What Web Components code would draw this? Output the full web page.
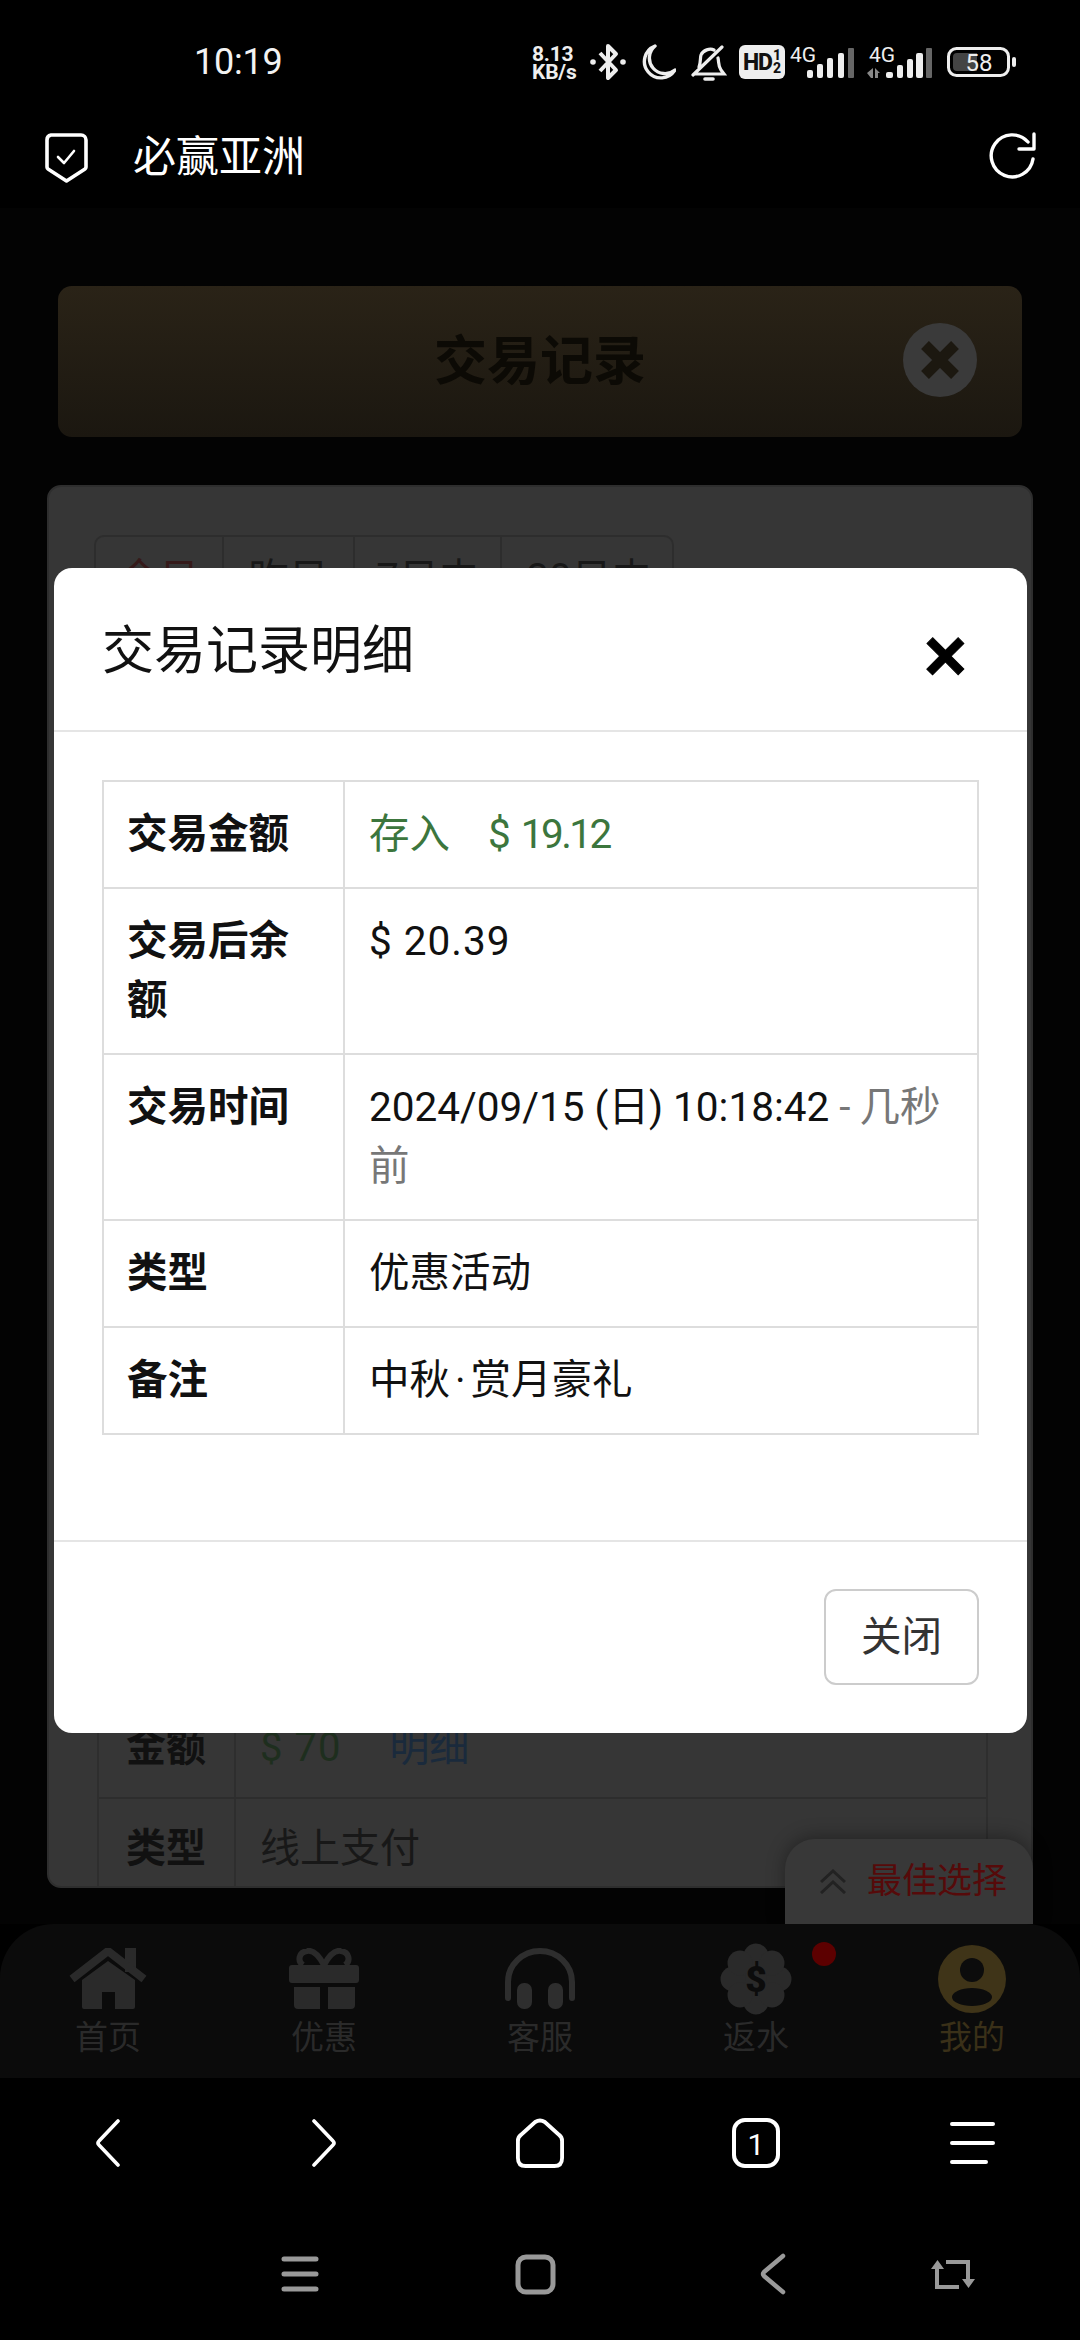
<!DOCTYPE html>
<html lang="zh-CN">
<head>
<meta charset="utf-8">
<title>交易记录明细</title>
<style>
  html, body { margin: 0; padding: 0; background: #000; }
  body { width: 1080px; height: 2340px; overflow: hidden; font-family: Roboto, "Noto Sans CJK SC", sans-serif; }
</style>
</head>
<body>
<phone-status></phone-status>
<app-bar>必赢亚洲</app-bar>
<page-view>
  <record-header>交易记录</record-header>
  <record-card>
    <range-tabs>
      <range-tab class="on" style="width:128px">今日</range-tab>
      <range-tab style="width:131px">昨日</range-tab>
      <range-tab style="width:147px">7日内</range-tab>
      <range-tab style="width:174px" last>30日内</range-tab>
    </range-tabs>
    <back-table>
      <back-row label="金额"><span style="color:#1e2e1e;letter-spacing:1px">$ 70</span><span style="color:#1a2a3c;margin-left:48px">明细</span></back-row>
      <back-row label="类型">线上支付</back-row>
    </back-table>
  </record-card>
  <best-choice>最佳选择</best-choice>
  <detail-modal>
    <span slot="title">交易记录明细</span>
    <detail-row label="交易金额"><span style="color:#3c763d">存入<span style="margin-left:38px">$ <span style="letter-spacing:-2.6px">19.12</span></span></span></detail-row>
    <detail-row label="交易后余额"><span style="letter-spacing:1px">$ 20.39</span></detail-row>
    <detail-row label="交易时间">2024/09/15 (日) 10:18:42 <span style="color:#777"><span style="letter-spacing:9px">-</span>几秒前</span></detail-row>
    <detail-row label="类型">优惠活动</detail-row>
    <detail-row label="备注">中秋<span style="margin:0 5px">·</span>赏月豪礼</detail-row>
  </detail-modal>
</page-view>
<main-nav>
  <nav-item>
    <svg slot="icon" width="80" height="61" viewBox="0 0 80 61" fill="#2a2a2a"><rect x="57" y="0" width="11" height="24"/><path d="M4 31 40 3l36 28" fill="none" stroke="#2a2a2a" stroke-width="8"/><path d="M14 32 40 13l27 19v27a2 2 0 0 1-2 2H47V44H34v17H16a2 2 0 0 1-2-2z"/></svg>
    首页
  </nav-item>
  <nav-item>
    <svg slot="icon" width="70" height="61" viewBox="0 0 70 61" fill="#2a2a2a"><path d="M35 17C29 6 23 2 18 3 10 4 8 13 14 17M35 17C41 6 47 2 52 3c8 1 10 10 4 14" fill="none" stroke="#2a2a2a" stroke-width="6"/><rect x="0" y="17" width="70" height="18" rx="3"/><path d="M5 39h26v22H9a4 4 0 0 1-4-4zM39 39h27v18a4 4 0 0 1-4 4H39z"/></svg>
    优惠
  </nav-item>
  <nav-item>
    <svg slot="icon" width="70" height="61" viewBox="0 0 70 61" fill="#2e2e2e"><path d="M3 50V34a32 31 0 0 1 64 0v16" fill="none" stroke="#2e2e2e" stroke-width="6" stroke-linecap="round"/><rect x="12" y="35" width="15" height="26" rx="7"/><rect x="43" y="35" width="15" height="26" rx="7"/></svg>
    客服
  </nav-item>
  <nav-item>
    <svg slot="icon" width="72" height="72" viewBox="0 0 72 72" fill="#2a2a2a"><circle cx="36" cy="36" r="26"/><circle cx="36" cy="13" r="12.5"/><circle cx="36" cy="59" r="12.5"/><circle cx="13" cy="36" r="12.5"/><circle cx="59" cy="36" r="12.5"/><circle cx="20" cy="20" r="12.5"/><circle cx="52" cy="20" r="12.5"/><circle cx="20" cy="52" r="12.5"/><circle cx="52" cy="52" r="12.5"/><text x="36" y="49" text-anchor="middle" font-family="Roboto" font-weight="900" font-size="37" fill="#0c0c0c">$</text></svg>
    返水
    <span slot="dot"></span>
  </nav-item>
  <nav-item style="color:#3a3018">
    <svg slot="icon" width="68" height="68" viewBox="0 0 68 68"><circle cx="34" cy="34" r="34" fill="#3f3418"/><circle cx="34" cy="25" r="12" fill="#0c0c0c"/><ellipse cx="34" cy="52" rx="20" ry="9" fill="#0c0c0c"/></svg>
    我的
  </nav-item>
</main-nav>
<browser-bar></browser-bar>
<system-nav></system-nav>
<script>
function define(name, css, html, init) {
  customElements.define(name, class extends HTMLElement {
    constructor() {
      super();
      const root = this.attachShadow({ mode: 'open' });
      root.innerHTML = '<style>' + css + '</style>' + html;
    }
    connectedCallback() { if (init) init(this, this.shadowRoot); }
  });
}

define('phone-status', `
  :host{display:flex;align-items:flex-start;height:104px;box-sizing:border-box;color:#fff;position:relative}
  .time{font:400 36px/44px Roboto,sans-serif;margin:40px 0 0 194px;color:#f2f2f2;flex:none;letter-spacing:-.2px}
  .speed{font:700 21px/18px Roboto,sans-serif;margin:45px 0 0 auto;width:48px;flex:none;color:#eee;letter-spacing:-.2px}
  .speed span{display:block}
  svg{display:block;flex:none}
  .hd{flex:none;margin:45px 0 0 12px;width:46px;height:34px;border-radius:6px;background:#eee;color:#111;display:flex;align-items:center;justify-content:center;font:800 23px/1 Roboto,sans-serif;letter-spacing:-1px}
  .hd i{font:800 14px/13px Roboto,sans-serif;display:flex;flex-direction:column;margin-left:1px;letter-spacing:0}
  .end{width:65px;flex:none}
`, `
  <span class="time">10:19</span>
  <span class="speed"><span>8.13</span><span>KB/s</span></span>
  <svg style="margin:43px 0 0 10px" width="36" height="38" viewBox="0 0 36 38" fill="none" stroke="#eee" stroke-width="4" stroke-linejoin="round"><path d="M10 10 26 27l-8 8V3l8 8-16 17"/><circle cx="3" cy="19" r="2.8" fill="#eee" stroke="none"/><circle cx="33" cy="19" r="2.8" fill="#eee" stroke="none"/></svg>
  <svg style="margin:44px 0 0 15px" width="35" height="36" viewBox="0 0 35 36" fill="none" stroke="#eee" stroke-width="3.4" stroke-linejoin="round"><path d="M14 2A16.500 16.500 0 1 0 34 26 15 15 0 0 1 14 2z"/></svg>
  <svg style="margin:45px 0 0 15px" width="36" height="37" viewBox="0 0 36 37" fill="none" stroke="#eee" stroke-width="3.2" stroke-linecap="round"><path d="M8 22c2-5 1-9 2-12 2-5 9-7 13-5M27 13c1 4 0 8 3 12l3 4H3M2 30 31 2"/><path d="M14 34h8" stroke-width="3.6"/></svg>
  <span class="hd">HD<i><span>1</span><span>2</span></i></span>
  <svg style="margin:45px 0 0 5px" width="64" height="34" viewBox="0 0 64 34" fill="#eee"><text x="0" y="17" font-family="Roboto" font-size="21">4G</text><rect x="17" y="25" width="6" height="8" rx="2"/><rect x="27" y="19" width="6" height="14" rx="2"/><rect x="37" y="13" width="6" height="20" rx="2"/><rect x="48" y="8" width="6" height="25" rx="2"/><rect x="58" y="3" width="6" height="30" rx="1" fill="#666"/></svg>
  <svg style="margin:45px 0 0 12px" width="66" height="34" viewBox="0 0 66 34" fill="#eee"><text x="3" y="17" font-family="Roboto" font-size="21">4G</text><path d="M7 23v10H5l-4-5zM9 23l5 5h-2v5H9z" fill="#888"/><rect x="20" y="27" width="7" height="6" rx="2"/><rect x="31" y="20" width="6" height="13" rx="2"/><rect x="41" y="14" width="6" height="19" rx="2"/><rect x="50" y="8" width="7" height="25" rx="2"/><rect x="60" y="3" width="6" height="30" rx="1" fill="#666"/></svg>
  <svg style="margin:47px 63px 0 15px" width="70" height="30" viewBox="0 0 70 30"><rect x="1.5" y="1.5" width="60" height="27" rx="8" fill="none" stroke="#eee" stroke-width="3"/><path d="M10 6h20v18H10a4 4 0 0 1-4-4v-10a4 4 0 0 1 4-4z" fill="#444"/><text x="32" y="24" text-anchor="middle" font-family="Roboto" font-size="24" fill="#eee">58</text><rect x="65" y="10" width="4" height="10" rx="2" fill="#eee"/></svg>
`);

define('app-bar', `
  :host{display:flex;align-items:center;height:104px;color:#fff;font:400 43px/60px Roboto,"Noto Sans CJK SC",sans-serif}
  svg{display:block;flex:none}
  .title{flex:1;margin-left:44px;padding-top:2px}
`, `
  <svg style="margin:3px 0 0 44px" width="45" height="50" viewBox="0 0 45 50" fill="none" stroke="#fff" stroke-linejoin="round"><path stroke-width="3.6" d="M7 2h30a5 5 0 0 1 5 5v27a3 3 0 0 1-1 2L22.500 48 4 36a3 3 0 0 1-1-2V7a5 5 0 0 1 4-5z"/><path stroke-width="2.600" stroke-linecap="round" d="m14 24 6 6 10-12"/></svg>
  <span class="title"><slot></slot></span>
  <svg style="margin-right:43px" width="48" height="48" viewBox="0 0 48 48" fill="none" stroke="#fff" stroke-width="3.4" stroke-linecap="round" stroke-linejoin="round"><path d="M44 27A21 21 0 1 1 39 10"/><path d="M45 2v15H30"/></svg>
`);

define('page-view', `
  :host{display:block;position:relative;height:1716px;background:#030303;padding-top:78px;box-sizing:border-box}
`, `<slot></slot>`);

define('record-header', `
  :host{display:flex;align-items:center;justify-content:center;position:relative;height:151px;margin:0 58px 48px 58px;border-radius:14px;background:linear-gradient(#2a2317,#1b1710);color:#0c0a05;font:700 53px/60px Roboto,"Noto Sans CJK SC",sans-serif}
  .x{position:absolute;right:45px;top:37px;width:74px;height:74px;border-radius:50%;background:#3a3a3a;display:flex;align-items:center;justify-content:center}
`, `<slot></slot><span class="x"><svg width="40" height="38" viewBox="0 0 40 38" stroke="#1c1810" stroke-width="11"><path d="M5 4 35 34M35 4 5 34"/></svg></span>`);

define('record-card', `
  :host{display:block;margin:0 47px;height:1403px;box-sizing:border-box;background:#363636;border:2px solid #2e2e2e;border-radius:14px;overflow:hidden;padding:48px 45px 0;color:#181818;font:400 40px/59px Roboto,"Noto Sans CJK SC",sans-serif}
`, `<slot></slot>`);

define('range-tabs', `
  :host{display:flex;width:580px;box-sizing:border-box;border:2px solid #2d2d2d;border-radius:10px}
`, `<slot></slot>`);

define('range-tab', `
  :host{display:block;box-sizing:border-box;height:78px;padding-top:12px;text-align:center;border-right:2px solid #2d2d2d;flex:none}
  :host([last]){border-right:0}
  :host(.on){color:#351a1a}
`, `<slot></slot>`);

define('back-table', `
  :host{display:block;margin:1081px -2px 0 3px;border:solid #2e2e2e;border-width:0 2px}
`, `<slot></slot>`);

define('back-row', `
  :host{display:grid;grid-template-columns:137px 1fr;border-bottom:2px solid #2d2d2d}
  .l{font-weight:700;padding:20px 0 20px 27px;border-right:2px solid #2e2e2e;color:#111}
  .v{padding:20px 24px}
`, `<div class="l"></div><div class="v"><slot></slot></div>`, (el, root) => {
  root.querySelector('.l').textContent = el.getAttribute('label');
});

define('best-choice', `
  :host{position:absolute;left:785px;top:1631px;width:248px;height:85px;box-sizing:border-box;background:#383838;border-radius:30px 30px 0 0;box-shadow:0 -2px 18px rgba(0,0,0,.35);display:flex;align-items:center;padding:0 0 0 35px;color:#560a0a;font:400 35px/50px Roboto,"Noto Sans CJK SC",sans-serif}
  svg{margin-right:21px;flex:none}
`, `<svg width="26" height="25" viewBox="0 0 26 25" fill="none" stroke="#222" stroke-width="3"><path d="m1 13 12-11 12 11M1 24l12-11 12 11"/></svg><slot></slot>`);

define('detail-modal', `
  :host{position:absolute;left:54px;top:360px;width:973px;height:1165px;background:#fff;border-radius:18px;color:#000;overflow:hidden;font:400 40.5px/59px Roboto,"Noto Sans CJK SC",sans-serif;display:flex;flex-direction:column}
  header{height:164px;flex:none;box-sizing:border-box;border-bottom:2px solid #e5e5e5;padding:6px 60px 0 48px;display:flex;align-items:center;justify-content:space-between;font-size:52px;line-height:70px;color:#111}
  .close{font:700 74px/74px "Liberation Sans",sans-serif;color:#000;margin-top:8px;-webkit-text-stroke:1px #000}
  main{flex:1;padding:48px 48px 0}
  .tbl{border:2px solid #ddd;border-bottom-width:0}
  footer{height:193px;flex:none;box-sizing:border-box;border-top:2px solid #e5e5e5;padding:47px 48px 0;display:flex;justify-content:flex-end}
  .btn{box-sizing:border-box;width:155px;height:96px;border:2px solid #ccc;border-radius:12px;color:#333;display:flex;align-items:center;justify-content:center}
`, `
  <header><slot name="title"></slot><span class="close">×</span></header>
  <main><div class="tbl"><slot></slot></div></main>
  <footer><span class="btn">关闭</span></footer>
`);

define('detail-row', `
  :host{display:grid;grid-template-columns:241px 1fr;border-bottom:2px solid #ddd}
  .l{font-weight:700;padding:23px 24px 23px 23px;border-right:2px solid #ddd;color:#111}
  .v{padding:23px 24px;color:#111}
`, `<div class="l"></div><div class="v"><slot></slot></div>`, (el, root) => {
  root.querySelector('.l').textContent = el.getAttribute('label');
});

define('main-nav', `
  :host{display:grid;grid-template-columns:repeat(5,1fr);height:154px;background:#0b0b0b;border-radius:54px 54px 0 0;position:relative;box-sizing:border-box;padding-top:24px}
`, `<slot></slot>`);

define('nav-item', `
  :host{display:flex;flex-direction:column;align-items:center;position:relative;color:#2a2a2a;font:400 33px/40px Roboto,"Noto Sans CJK SC",sans-serif;margin-top:0}
  .ic{height:61px;display:flex;align-items:center;justify-content:center;margin-bottom:9px}
  ::slotted([slot=dot]){position:absolute;left:164px;top:-6px;width:24px;height:24px;border-radius:50%;background:#5c0000}
`, `<div class="ic"><slot name="icon"></slot></div><slot></slot><slot name="dot"></slot>`);

define('browser-bar', `
  :host{display:grid;grid-template-columns:repeat(5,1fr);height:130px;align-items:center;justify-items:center;background:#000}
  svg{display:block}
`, `
  <svg width="26" height="50" viewBox="0 0 26 50" fill="none" stroke="#fff" stroke-width="3.6" stroke-linecap="round" stroke-linejoin="round"><path d="M23 3 4 23q-2 2 0 4l19 20"/></svg>
  <svg width="26" height="50" viewBox="0 0 26 50" fill="none" stroke="#fff" stroke-width="3.6" stroke-linecap="round" stroke-linejoin="round"><path d="m3 3 19 20q2 2 0 4L3 47"/></svg>
  <svg width="48" height="50" viewBox="0 0 50 50" preserveAspectRatio="none" fill="none" stroke="#fff" stroke-width="4" stroke-linejoin="round"><path d="M20 4q5-3 10 0l15 13q3 2 3 6v17q0 8-8 8H10q-8 0-8-8V23q0-4 3-6z"/></svg>
  <svg width="48" height="50" viewBox="0 0 48 50"><rect x="2" y="2" width="44" height="46" rx="11" fill="none" stroke="#fff" stroke-width="4"/><text x="24" y="37" text-anchor="middle" font-family="Roboto" font-size="30" fill="#fff">1</text></svg>
  <svg width="46" height="44" viewBox="0 0 46 44" stroke="#fff" stroke-width="4" stroke-linecap="round"><path d="M3 3h41M3 22h41M3 41h34"/></svg>
`);

define('system-nav', `
  :host{display:flex;align-items:center;height:132px;padding-left:281px;background:#000}
  svg{display:block;flex:none}
`, `
  <svg width="38" height="36" viewBox="0 0 38 36" stroke="#999" stroke-width="5" stroke-linecap="round"><path d="M3 3h32M3 18h32M3 33h32"/></svg>
  <svg style="margin-left:196px" width="41" height="41" viewBox="0 0 41 41" fill="none" stroke="#999" stroke-width="5"><rect x="3" y="3" width="35" height="35" rx="8"/></svg>
  <svg style="margin-left:204px" width="26" height="42" viewBox="0 0 26 42" fill="none" stroke="#999" stroke-width="4.500" stroke-linecap="round" stroke-linejoin="round"><path d="M23 3 4 19q-2 2 0 4l19 16"/></svg>
  <svg style="margin-left:144px" width="48" height="30" viewBox="0 0 48 30" fill="none" stroke="#999" stroke-width="4"><path d="M7 9v19h22M16 3h22v19"/><path d="M1 10 7.500 1 14 10zM32 20l6.500 9 6.500-9z" fill="#999" stroke="none"/></svg>
`);
</script>
</body>
</html>
